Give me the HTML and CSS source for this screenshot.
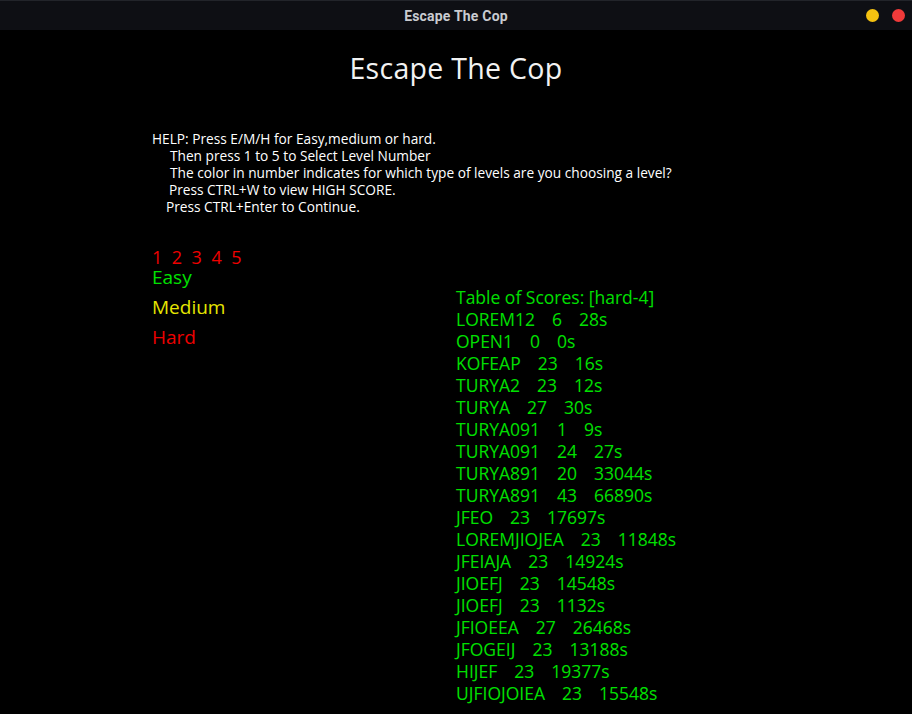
FILE: index.html
```html
<!DOCTYPE html>
<html>
<head>
<meta charset="utf-8">
<link rel="stylesheet" href="styles.css">
</head>
<body>
<div class="window">
  <div class="titlebar">
    <span class="title">Escape The Cop</span>
    <div class="controls">
      <span class="dot yellow"></span>
      <span class="dot red"></span>
    </div>
  </div>
  <main class="content">
    <h1 class="heading">Escape The Cop</h1>
    <div class="help">
      <div class="l0">HELP: Press E/M/H for Easy,medium or hard.</div>
      <div class="l1">Then press 1 to 5 to Select Level Number</div>
      <div class="l1">The color in number indicates for which type of levels are you choosing a level?</div>
      <div class="l2">Press CTRL+W to view HIGH SCORE.</div>
      <div class="l3">Press CTRL+Enter to Continue.</div>
    </div>
    <div class="lower">
      <div class="levels">
        <div class="numbers"><span>1</span><span>2</span><span>3</span><span>4</span><span>5</span></div>
        <div class="diff easy">Easy</div>
        <div class="diff medium">Medium</div>
        <div class="diff hard">Hard</div>
      </div>
      <div class="scores">
        <div class="head">Table of Scores: [hard-4]</div>
        <div class="row"><span>LOREM12</span><span>6</span><span>28s</span></div>
        <div class="row"><span>OPEN1</span><span>0</span><span>0s</span></div>
        <div class="row"><span>KOFEAP</span><span>23</span><span>16s</span></div>
        <div class="row"><span>TURYA2</span><span>23</span><span>12s</span></div>
        <div class="row"><span>TURYA</span><span>27</span><span>30s</span></div>
        <div class="row"><span>TURYA091</span><span>1</span><span>9s</span></div>
        <div class="row"><span>TURYA091</span><span>24</span><span>27s</span></div>
        <div class="row"><span>TURYA891</span><span>20</span><span>33044s</span></div>
        <div class="row"><span>TURYA891</span><span>43</span><span>66890s</span></div>
        <div class="row"><span>JFEO</span><span>23</span><span>17697s</span></div>
        <div class="row"><span>LOREMJIOJEA</span><span>23</span><span>11848s</span></div>
        <div class="row"><span>JFEIAJA</span><span>23</span><span>14924s</span></div>
        <div class="row"><span>JIOEFJ</span><span>23</span><span>14548s</span></div>
        <div class="row"><span>JIOEFJ</span><span>23</span><span>1132s</span></div>
        <div class="row"><span>JFIOEEA</span><span>27</span><span>26468s</span></div>
        <div class="row"><span>JFOGEIJ</span><span>23</span><span>13188s</span></div>
        <div class="row"><span>HIJEF</span><span>23</span><span>19377s</span></div>
        <div class="row"><span>UJFIOJOIEA</span><span>23</span><span>15548s</span></div>
      </div>
    </div>
  </main>
</div>
</body>
</html>
```
FILE: styles.css
```css
html, body {
  margin: 0;
  padding: 0;
  background: #000;
}
.window {
  width: 912px;
  height: 714px;
  overflow: hidden;
  background: #000;
  font-family: "Open Sans", "Noto Sans", sans-serif;
}
.titlebar {
  height: 30px;
  background: #0e0f14;
  display: flex;
  align-items: center;
  justify-content: center;
  position: relative;
  border-top: 1px solid #22242a;
  box-sizing: border-box;
}
.title {
  color: #c9cbd0;
  font-family: "Roboto", "Liberation Sans", sans-serif;
  font-weight: 700;
  font-size: 14px;
  letter-spacing: 0.2px;
}
.controls {
  position: absolute;
  right: 7px;
  top: 8px;
  display: flex;
  gap: 13px;
}
.dot {
  width: 13px;
  height: 13px;
  border-radius: 50%;
}
.yellow { background: #f5c211; }
.red { background: #f03a3a; }
.content {
  padding: 0 0 0 152px;
}
.heading {
  margin: 0;
  padding-top: 20px;
  padding-right: 152px;
  text-align: center;
  font-weight: 400;
  font-size: 28.5px;
  line-height: 36px;
  color: #f2f2f2;
  letter-spacing: 0.3px;
}
.help {
  margin-top: 44px;
  color: #fff;
  font-size: 13.7px;
  line-height: 17px;
}
.l1 { padding-left: 18px; }
.l2 { padding-left: 17px; }
.l3 { padding-left: 14px; }
.lower {
  display: flex;
  margin-top: 32px;
}
.levels {
  width: 304px;
}
.numbers {
  display: flex;
  gap: 9.5px;
  color: #ee0000;
  font-size: 18px;
  line-height: 20px;
}
.diff {
  font-size: 19px;
  line-height: 30px;
}
.easy { color: #00e000; line-height: 20px; margin-bottom: 5px; }
.medium { color: #e6e600; }
.hard { color: #ee0000; }
.scores {
  margin-top: 39px;
  color: #00e000;
  font-size: 17.5px;
  line-height: 22px;
}
.row {
  display: flex;
  gap: 17px;
}
```
